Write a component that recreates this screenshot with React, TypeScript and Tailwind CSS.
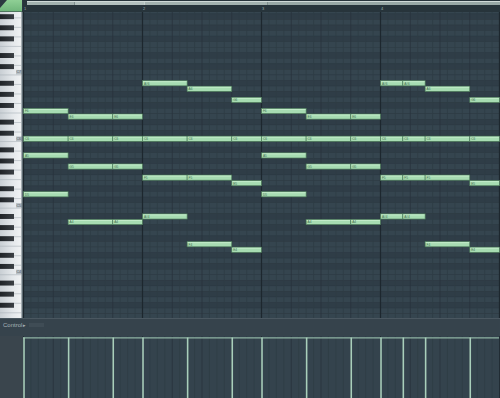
import React from "react";

const P = 5.55; // row height
const S = 119 / 16; // step width
const C6 = 124; // top of the C6 row inside the grid
const GH = 306;
const GW = 477;
const BLACK = [1, 3, 6, 8, 10];
const NAMES = ["C", "C#", "D", "D#", "E", "F", "F#", "G", "G#", "A", "A#", "B"];

const mod = (a: number, b: number) => ((a % b) + b) % b;
const noteName = (n: number) => NAMES[mod(n, 12)] + (6 + Math.floor(n / 12));
const rowTop = (n: number) => C6 - n * P;

// [start step, length, pitches relative to C6]
const segments: [number, number, number[]][] = [
  [0, 6, [5, 0, -3, -10]],
  [6, 6, [4, 0, -5, -15]],
  [12, 4, [4, 0, -5, -15]],
  [16, 6, [10, 0, -7, -14]],
  [22, 6, [9, 0, -7, -19]],
  [28, 4, [7, 0, -8, -20]],
  [32, 6, [5, 0, -3, -10]],
  [38, 6, [4, 0, -5, -15]],
  [44, 4, [4, 0, -5, -15]],
  [48, 3, [10, 0, -7, -14]],
  [51, 3, [10, 0, -7, -14]],
  [54, 6, [9, 0, -7, -19]],
  [60, 4, [7, 0, -8, -20]],
];

const rows: number[] = [];
for (let n = 23; n >= -34; n--) rows.push(n);

const steps: number[] = [];
for (let i = 0; i <= 64; i++) steps.push(i);

const lineColor = (i: number) =>
  i % 16 === 0 ? "#1d272e" : i % 4 === 0 ? "#28343c" : "#2f3c45";

function Keyboard() {
  const whiteLines: number[] = [];
  for (let o = -3; o <= 2; o++) {
    const bottom = rowTop(o * 12) + P;
    for (let k = 0; k < 7; k++) whiteLines.push(bottom - k * ((12 * P) / 7));
  }
  return (
    <svg width={23} height={GH} className="block">
      <defs>
        <linearGradient id="wk" x1="0" x2="1" y1="0" y2="0">
          <stop offset="0" stopColor="#c9cfd4" />
          <stop offset="0.55" stopColor="#e4e8eb" />
          <stop offset="1" stopColor="#f3f5f6" />
        </linearGradient>
        <linearGradient id="bk" x1="0" x2="1" y1="0" y2="0">
          <stop offset="0" stopColor="#1f2327" />
          <stop offset="1" stopColor="#3a3f44" />
        </linearGradient>
      </defs>
      <rect x={0} y={0} width={23} height={GH} fill="url(#wk)" />
      {whiteLines.map((y, i) => (
        <line key={i} x1={0} x2={21} y1={y} y2={y} stroke="#a9b1b8" strokeWidth={0.6} />
      ))}
      {rows
        .filter((n) => BLACK.includes(mod(n, 12)))
        .map((n) => (
          <rect key={n} x={0} y={rowTop(n) + 0.3} width={14} height={P - 0.6} fill="url(#bk)" />
        ))}
      {[12, 0, -12, -24].map((n) => (
        <g key={n}>
          <rect x={16} y={rowTop(n) + 0.5} width={6} height={P - 1} fill="#b9c0c5" />
          <text x={16.5} y={rowTop(n) + 4} fontSize={3.6} fill="#4b555c" fontFamily="Liberation Sans, sans-serif">
            {noteName(n)}
          </text>
        </g>
      ))}
      <rect x={21.5} y={0} width={1.5} height={GH} fill="#5d6a72" />
    </svg>
  );
}

function Grid() {
  return (
    <svg width={GW} height={GH} className="block">
      <rect x={0} y={0} width={GW} height={GH} fill="#34434d" />
      {rows.map((n) => (
        <rect
          key={n}
          x={0}
          y={rowTop(n)}
          width={GW}
          height={P}
          fill={BLACK.includes(mod(n, 12)) ? "#2f3d47" : "#35454f"}
          stroke="#2d3a43"
          strokeWidth={0.4}
        />
      ))}
      {steps.map((i) => (
        <line
          key={i}
          x1={i * S + 0.5}
          x2={i * S + 0.5}
          y1={0}
          y2={GH}
          stroke={lineColor(i)}
          strokeWidth={i % 16 === 0 ? 1.2 : 0.8}
        />
      ))}
      {segments.map(([st, len, ps]) =>
        ps.map((n) => {
          const x = st * S + 0.5;
          const y = rowTop(n) + 0.2;
          const w = len * S;
          return (
            <g key={st + "-" + n}>
              <rect x={x} y={y} width={w} height={P - 0.4} fill="#a7dcb2" stroke="#4d7a5b" strokeWidth={0.7} />
              <rect x={x + 0.6} y={y + 0.5} width={w - 1.2} height={1} fill="#c4ecca" />
              <text x={x + 1.4} y={y + 3.9} fontSize={3.2} fill="#466f52" fontFamily="Liberation Sans, sans-serif">
                {noteName(n)}
              </text>
            </g>
          );
        })
      )}
    </svg>
  );
}

function EventLane() {
  return (
    <svg width={GW} height={62} className="block">
      <rect x={0} y={0} width={GW} height={62} fill="#34434d" />
      {steps.map((i) => (
        <line key={i} x1={i * S + 0.5} x2={i * S + 0.5} y1={0} y2={62} stroke={lineColor(i)} strokeWidth={0.8} />
      ))}
      <line x1={0} x2={476} y1={1.8} y2={1.8} stroke="#8fb3a3" strokeWidth={1.2} />
      {segments.map(([st]) => (
        <line key={st} x1={st * S + 1} x2={st * S + 1} y1={1.5} y2={62} stroke="#a9cfbb" strokeWidth={1.6} />
      ))}
    </svg>
  );
}

export default function App() {
  return (
    <div className="w-[500px] h-[398px] overflow-hidden flex flex-col bg-[#3a454d] font-['Liberation_Sans',sans-serif]">
      <div className="flex h-[12px] bg-[#27343b]">
        <div className="w-[23px] h-full">
          <svg width={23} height={12} className="block">
            <defs>
              <linearGradient id="tab" x1="0" x2="0" y1="0" y2="1">
                <stop offset="0" stopColor="#8fcf95" />
                <stop offset="1" stopColor="#6fb57a" />
              </linearGradient>
            </defs>
            <rect width={23} height={12} fill="#2c3940" />
            <polygon points="7,0 22,0 22,11.5 0,11.5 0,8" fill="url(#tab)" />
          </svg>
        </div>
        <div className="flex-1 flex flex-col">
          <div className="h-[6px] flex">
            <div className="w-[4px]" />
            <div className="flex-1 mt-[1px] h-[4px] bg-[#a3b2b0] border-t border-[#d0dad8] flex">
              <div className="w-[48px] border-r border-[#7f8f8e]" />
              <div className="w-[70px] border-r border-[#c3cfcd] bg-[#b3c1bf]" />
              <div className="w-[123px] border-r border-[#7f8f8e]" />
              <div className="flex-1 bg-[#98a8a6]" />
            </div>
          </div>
          <div className="flex-1 relative">
            {[0, 1, 2, 3].map((b) => (
              <span
                key={b}
                className="absolute top-[0px] text-[4px] leading-[5px] text-[#9fb0b6]"
                style={{ left: b * 119 + 1 }}
              >
                {b + 1}
              </span>
            ))}
          </div>
        </div>
      </div>
      <div className="flex h-[306px]">
        <Keyboard />
        <Grid />
      </div>
      <div className="h-[18px] flex flex-col bg-[#36434c] border-t border-[#4a5760]">
        <div className="flex items-center h-[12px] pl-[3px] gap-[1px]">
          <span className="text-[6px] leading-[8px] text-[#a8b3b9]">Control</span>
          <span className="text-[5px] leading-[8px] text-[#a8b3b9]">▸</span>
          <span className="ml-[2px] w-[15px] h-[4px] bg-[#3f4c55]" />
        </div>
      </div>
      <div className="flex h-[62px]">
        <div className="w-[23px] bg-[#3a454d]" />
        <EventLane />
      </div>
    </div>
  );
}
